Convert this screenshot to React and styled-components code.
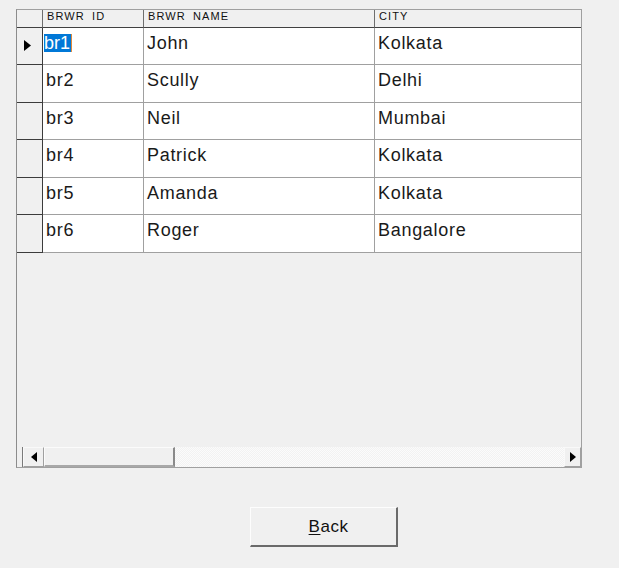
import styled, { createGlobalStyle } from "styled-components";

const GlobalStyle = createGlobalStyle`
	html, body {
		margin: 0;
		padding: 0;
		background: #f0f0f0;
	}
	body {
		font-family: "Liberation Sans", Arial, sans-serif;
		color: #000;
	}
`;

const borrowers = [
	{ id: "br1", name: "John", city: "Kolkata" },
	{ id: "br2", name: "Scully", city: "Delhi" },
	{ id: "br3", name: "Neil", city: "Mumbai" },
	{ id: "br4", name: "Patrick", city: "Kolkata" },
	{ id: "br5", name: "Amanda", city: "Kolkata" },
	{ id: "br6", name: "Roger", city: "Bangalore" },
];

const Page = styled.div`
	width: 619px;
	height: 568px;
	padding: 9px 0 0 16px;
	box-sizing: border-box;
	display: flex;
	flex-direction: column;
`;

const Grid = styled.div`
	width: 566px;
	height: 459px;
	box-sizing: border-box;
	border: 1px solid #a0a0a0;
	border-left-color: #8c8c8c;
	display: flex;
	flex-direction: column;
	background: #f0f0f0;
`;

const Row = styled.div`
	display: grid;
	grid-template-columns: 26px 101px 231px 1fr;
	height: ${(p) => p.$height}px;
	box-sizing: border-box;
`;

const HeadCell = styled.div`
	background: #f0f0f0;
	border-right: 1px solid #6e6e6e;
	border-bottom: 1px solid #404040;
	padding: 1px 0 0 4px;
	box-sizing: border-box;
	span {
		display: block;
		font-size: 11px;
		letter-spacing: 1.1px;
		line-height: 11px;
		height: 10px;
		overflow: hidden;
		white-space: nowrap;
		color: #111;
	}
	&:last-child {
		border-right: none;
	}
`;

const Selector = styled.div`
	background: #f0f0f0;
	border-right: 1px solid #3c3c3c;
	border-bottom: 1px solid #3c3c3c;
	display: flex;
	align-items: flex-start;
	padding: 12px 0 0 7px;
	box-sizing: border-box;
`;

const Cell = styled.div`
	background: #fff;
	border-right: 1px solid #a0a0a0;
	border-bottom: 1px solid #a0a0a0;
	font-size: 18px;
	letter-spacing: 0.7px;
	line-height: 20px;
	padding: 5px 0 0 3px;
	box-sizing: border-box;
	white-space: nowrap;
	overflow: hidden;
	color: #1a1a1a;
	&:last-child {
		border-right: none;
	}
`;

const Selected = styled.span`
	display: inline-block;
	background: #0078d7;
	color: #fff;
	letter-spacing: 0;
	padding: 0 1px 0 0;
	margin-left: -2px;
	border-right: 1px solid #e08a3c;
	line-height: 18px;
`;

const Filler = styled.div`
	flex: 1;
`;

const ScrollBar = styled.div`
	height: 20px;
	margin-left: 5px;
	border-left: 1px solid #7a7a7a;
	display: flex;
	align-items: stretch;
	background: #f0f0f0;
`;

const ScrollButton = styled.div`
	width: ${(p) => p.$width}px;
	box-sizing: border-box;
	display: flex;
	align-items: center;
	justify-content: center;
	background: #f0f0f0;
	border: 1px solid #f9f9f9;
	border-right-color: #a0a0a0;
	border-bottom-color: #a0a0a0;
`;

const Thumb = styled.div`
	width: 131px;
	box-sizing: border-box;
	background: #f0f0f0;
	border-top: 1px solid #fbfbfb;
	border-left: 1px solid #fbfbfb;
	border-right: 2px solid #8a8a8a;
	border-bottom: 2px solid #a8a8a8;
`;

const Track = styled.div`
	flex: 1;
	background-color: #f7f7f7;
	background-image: repeating-conic-gradient(#f2f2f2 0 25%, #fbfbfb 0 50%);
	background-size: 2px 2px;
`;

const ButtonBar = styled.div`
	display: flex;
	justify-content: flex-start;
	padding: 39px 0 0 234px;
`;

const BackButton = styled.button`
	width: 148px;
	height: 40px;
	box-sizing: border-box;
	background: #f0f0f0;
	border: 1px solid #fdfdfd;
	border-right: 2px solid #6a6a6a;
	border-bottom: 2px solid #6a6a6a;
	font-family: "Liberation Sans", Arial, sans-serif;
	font-size: 17px;
	letter-spacing: 0.5px;
	color: #111;
	padding: 0 0 0 10px;
	u {
		text-decoration-thickness: 1px;
		text-underline-offset: 2px;
	}
`;

function Triangle({ dir, w = 6, h = 10 }) {
	const points = dir === "left" ? `${w},0 ${w},${h} 0,${h / 2}` : `0,0 0,${h} ${w},${h / 2}`;
	return (
		<svg width={w} height={h} viewBox={`0 0 ${w} ${h}`}>
			<polygon points={points} fill="#000" />
		</svg>
	);
}

export default function App() {
	return (
		<>
			<GlobalStyle />
			<Page>
				<Grid>
					<Row $height={18}>
						<HeadCell />
						<HeadCell><span>BRWR_ID</span></HeadCell>
						<HeadCell><span>BRWR_NAME</span></HeadCell>
						<HeadCell><span>CITY</span></HeadCell>
					</Row>
					{borrowers.map((b, i) => (
						<Row key={b.id} $height={i % 2 ? 38 : 37}>
							<Selector>{i === 0 && <Triangle dir="right" w={7} h={11} />}</Selector>
							<Cell>{i === 0 ? <Selected>{b.id}</Selected> : b.id}</Cell>
							<Cell>{b.name}</Cell>
							<Cell>{b.city}</Cell>
						</Row>
					))}
					<Filler />
					<ScrollBar>
						<ScrollButton $width={21}>
							<Triangle dir="left" />
						</ScrollButton>
						<Thumb />
						<Track />
						<ScrollButton $width={17}>
							<Triangle dir="right" />
						</ScrollButton>
					</ScrollBar>
				</Grid>
				<ButtonBar>
					<BackButton>
						<u>B</u>ack
					</BackButton>
				</ButtonBar>
			</Page>
		</>
	);
}
